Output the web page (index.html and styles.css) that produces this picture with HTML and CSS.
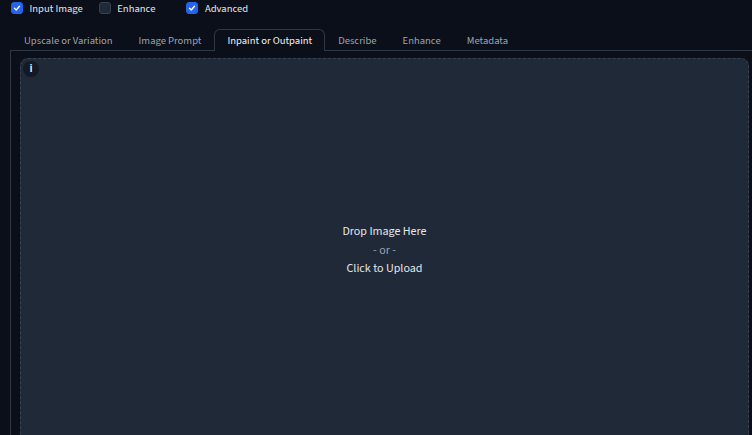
FILE: index.html
```html
<!DOCTYPE html>
<html>
<head>
<meta charset="utf-8">
<link rel="stylesheet" href="styles.css">
</head>
<body>
<div class="page">
  <div class="checks">
    <label class="check c1"><span class="box on"><svg viewBox="0 0 12 12" width="12" height="12"><path d="M3 6.3 L5.1 8.3 L9 3.9" fill="none" stroke="#fff" stroke-width="1.7" stroke-linecap="round" stroke-linejoin="round"/></svg></span><span class="lbl">Input Image</span></label>
    <label class="check c2"><span class="box"></span><span class="lbl">Enhance</span></label>
    <label class="check c3"><span class="box on"><svg viewBox="0 0 12 12" width="12" height="12"><path d="M3 6.3 L5.1 8.3 L9 3.9" fill="none" stroke="#fff" stroke-width="1.7" stroke-linecap="round" stroke-linejoin="round"/></svg></span><span class="lbl">Advanced</span></label>
  </div>
  <div class="tabbar">
    <div class="tab">Upscale or Variation</div>
    <div class="tab">Image Prompt</div>
    <div class="tab selected">Inpaint or Outpaint</div>
    <div class="tab">Describe</div>
    <div class="tab">Enhance</div>
    <div class="tab">Metadata</div>
  </div>
  <div class="panel">
    <div class="upload">
      <span class="info">i</span>
      <div class="drop">
        <div class="d1">Drop Image Here</div>
        <div class="d2">- or -</div>
        <div class="d3">Click to Upload</div>
      </div>
    </div>
  </div>
</div>
</body>
</html>
```
FILE: styles.css
```css
html, body {
  margin: 0;
  padding: 0;
  background: #0b0f19;
  height: 100%;
  overflow: hidden;
}
body {
  font-family: "Source Sans 3", "Lato", sans-serif;
  color: #e5e7eb;
}
.page {
  display: flex;
  flex-direction: column;
  height: 435px;
}
.checks {
  display: flex;
  align-items: center;
  height: 12px;
  margin-top: 2px;
  padding-left: 11px;
}
.check {
  display: flex;
  align-items: center;
}
.c1 { margin-right: 16px; }
.c2 { margin-right: 31px; }
.box {
  width: 12px;
  height: 12px;
  border-radius: 3px;
  background: #1f2937;
  border: 1px solid #374151;
  box-sizing: border-box;
  display: flex;
  align-items: center;
  justify-content: center;
}
.box.on {
  background: #2563eb;
  border-color: #2563eb;
}
.lbl {
  margin-left: 6.5px;
  padding-top: 1px;
  font-size: 10.6px;
  line-height: 12px;
  color: #e5e7eb;
}
.tabbar {
  display: flex;
  margin: 15px 0 0 10px;
  padding-left: 1px;
  border-bottom: 1px solid #2f3744;
  height: 21px;
}
.tab {
  padding: 0 12px;
  font-size: 10.6px;
  color: #9ca3af;
  line-height: 22px;
  height: 22px;
  border: 1px solid transparent;
  border-bottom: none;
  border-radius: 6px 6px 0 0;
  box-sizing: border-box;
}
.tab.selected {
  color: #f3f4f6;
  border-color: #2f3744;
  background: #0b0f19;
  position: relative;
  z-index: 1;
}
.panel {
  flex: 1;
  margin-left: 10px;
  border-left: 1px solid #2f3744;
  padding: 7px 0 0 9px;
  display: flex;
  min-height: 0;
}
.upload {
  position: relative;
  flex: 1;
  margin-right: 3px;
  background: #1f2937;
  border: 1px dashed #374151;
  border-bottom: none;
  border-radius: 8px 8px 0 0;
  display: flex;
  justify-content: center;
}
.info {
  position: absolute;
  left: 2px;
  top: 2px;
  width: 16px;
  height: 16px;
  border-radius: 50%;
  background: #141a25;
  color: #f3f4f6;
  font-size: 12px;
  font-weight: 600;
  text-align: center;
  line-height: 16px;
}
.drop {
  margin-top: 164px;
  text-align: center;
  font-size: 12px;
}
.d1, .d3 { color: #e5e7eb; line-height: 18.5px; }
.d2 { color: #9ca3af; line-height: 18.5px; }
```
